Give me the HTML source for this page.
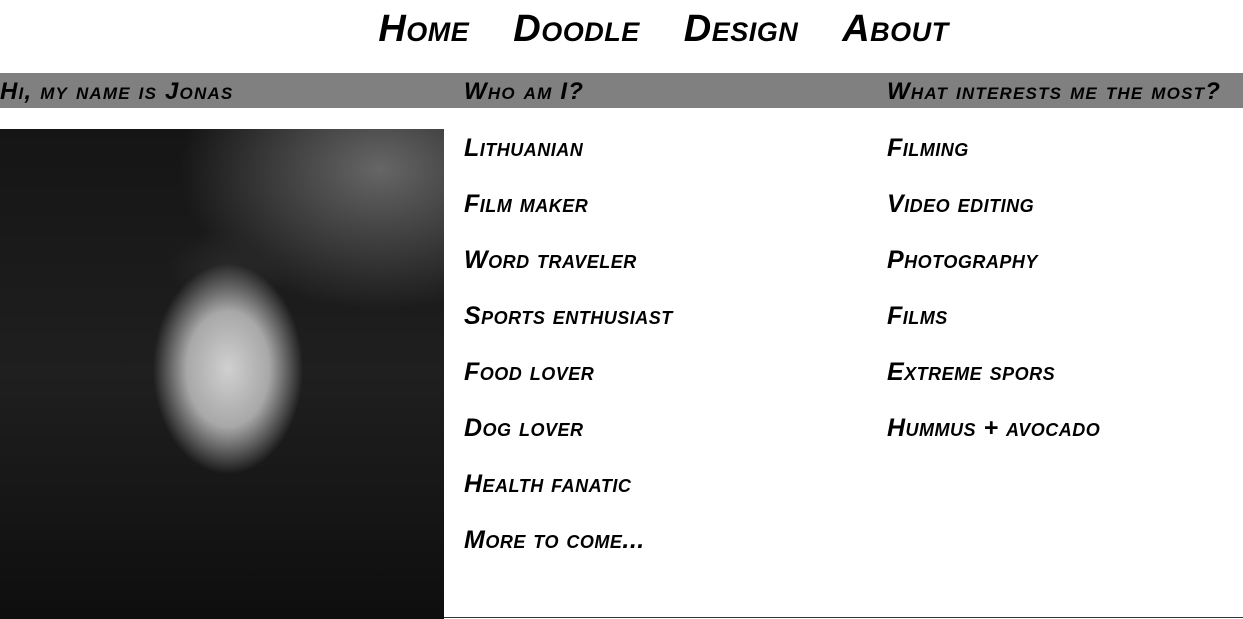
<!DOCTYPE html>
<html><head><meta charset="utf-8"><style>
html,body{margin:0;padding:0;width:1243px;height:619px;overflow:hidden;background:#fff;font-family:"Liberation Sans",sans-serif;}
.t{font-variant:small-caps;font-weight:bold;font-style:italic;color:#000;letter-spacing:0.5px;}
nav{position:absolute;top:8px;left:84px;width:1159px;text-align:center;white-space:nowrap;}
nav span{font-size:38px;margin:0 22px;}
.bar{position:absolute;top:73px;left:0;width:1243px;height:35px;background:#808080;}
.bar div{position:absolute;top:5px;font-size:24px;letter-spacing:1.2px;white-space:nowrap;}
.photo{position:absolute;left:0;top:129px;width:444px;height:490px;
background:radial-gradient(ellipse 75px 105px at 228px 240px,#d0d0d0 0%,#a8a8a8 55%,rgba(40,40,40,0) 100%),
radial-gradient(ellipse 60px 40px at 228px 140px,#2a2a2a 0%,rgba(20,20,20,0) 100%),
radial-gradient(ellipse 200px 140px at 380px 40px,#666 0%,rgba(30,30,30,0) 100%),
linear-gradient(#151515,#1f1f1f 50%,#0e0e0e);}
.col{position:absolute;top:132px;}
.col div{font-size:25px;height:56px;line-height:32px;white-space:nowrap;}
.bl{position:absolute;left:444px;top:617px;width:799px;height:1px;background:#333;}
</style></head><body>
<nav class="t"><span>Home</span><span>Doodle</span><span>Design</span><span>About</span></nav>
<div class="bar t"><div style="left:0">Hi, my name is Jonas</div><div style="left:464px">Who am I?</div><div style="left:887px">What interests me the most?</div></div>
<div class="photo"></div>
<div class="col t" style="left:464px"><div>Lithuanian</div><div>Film maker</div><div>Word traveler</div><div>Sports enthusiast</div><div>Food lover</div><div>Dog lover</div><div>Health fanatic</div><div>More to come...</div></div>
<div class="col t" style="left:887px"><div>Filming</div><div>Video editing</div><div>Photography</div><div>Films</div><div>Extreme spors</div><div>Hummus + avocado</div></div>
<div class="bl"></div>
</body></html>
